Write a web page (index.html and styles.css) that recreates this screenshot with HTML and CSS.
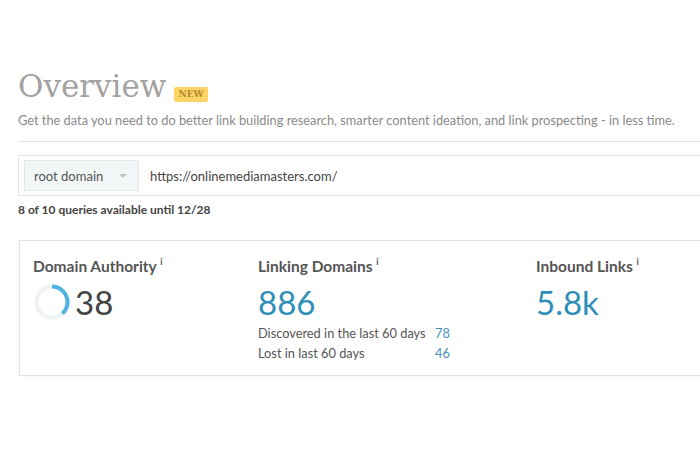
FILE: index.html
```html
<!DOCTYPE html>
<html lang="en">
<head>
<meta charset="utf-8">
<title>Overview</title>
<link rel="stylesheet" href="styles.css">
</head>
<body>
<main class="page">
  <header class="head">
    <h1 class="title">Overview <span class="badge">NEW</span></h1>
    <p class="lead">Get the data you need to do better link building research, smarter content ideation, and link prospecting - in less time.</p>
  </header>

  <div class="search">
    <div class="select">root domain <span class="caret"></span></div>
    <div class="url">https://onlinemediamasters.com/</div>
  </div>
  <p class="quota">8 of 10 queries available until 12/28</p>

  <section class="stats">
    <div class="stat">
      <h2 class="label">Domain Authority <sup>i</sup></h2>
      <div class="da">
        <svg class="donut" width="38" height="38" viewBox="0 0 38 38">
          <circle cx="19" cy="19" r="15.5" fill="none" stroke="#eef2f3" stroke-width="4"/>
          <circle cx="19" cy="19" r="15.5" fill="none" stroke="#4fb3e2" stroke-width="4" stroke-dasharray="37 100" transform="rotate(-90 19 19)"/>
        </svg>
        <span class="value dark">38</span>
      </div>
    </div>
    <div class="stat">
      <h2 class="label">Linking Domains <sup>i</sup></h2>
      <span class="value">886</span>
      <dl class="sub">
        <dt>Discovered in the last 60 days</dt><dd>78</dd>
        <dt>Lost in last 60 days</dt><dd>46</dd>
      </dl>
    </div>
    <div class="stat">
      <h2 class="label">Inbound Links <sup>i</sup></h2>
      <span class="value">5.8k</span>
    </div>
  </section>
</main>
</body>
</html>
```

FILE: styles.css
```css
* { box-sizing: border-box; }
html, body { margin: 0; padding: 0; background: #fff; overflow: hidden; }
body { font-family: Lato, "Open Sans", sans-serif; color: #555; width: 700px; height: 450px; }

.page { padding: 66px 0 0 18px; }

.head { border-bottom: 1px solid #e4e4e4; padding-bottom: 13px; width: 720px; }

.title {
  margin: 0;
  font-family: "DejaVu Serif", serif;
  font-weight: normal;
  font-size: 31px;
  line-height: 40px;
  color: #a2a2a2;
  display: flex;
  align-items: flex-end;
  gap: 8px;
}
.badge {
  font-family: "DejaVu Serif", serif;
  font-weight: bold;
  font-size: 9px;
  line-height: 15px;
  padding: 0 4px;
  background: #fdd465;
  color: #b18a2c;
  border-radius: 2px;
  margin-bottom: 4px;
}
.lead {
  margin: 6px 0 0;
  font-size: 12.8px;
  color: #8a8a8a;
  line-height: 16px;
}

.search {
  margin-top: 13px;
  height: 41px;
  width: 720px;
  border: 1px solid #e2e2e2;
  display: flex;
  align-items: center;
  padding-left: 5px;
  gap: 11px;
}
.select {
  width: 115px;
  height: 31px;
  background: #f2f6f6;
  border: 1px solid #e1e8e8;
  display: flex;
  align-items: center;
  padding-left: 9px;
  font-size: 13px;
  color: #555;
}
.caret {
  margin-left: 16px;
  width: 0; height: 0;
  border-left: 4px solid transparent;
  border-right: 4px solid transparent;
  border-top: 4px solid #bfc5c5;
}
.url { font-size: 13px; color: #444; }

.quota {
  margin: 6px 0 0;
  font-size: 12px;
  font-weight: bold;
  color: #444;
}

.stats {
  margin-top: 23px;
  margin-left: 1px;
  width: 720px;
  height: 136px;
  border: 1px solid #e3e3e3;
  box-shadow: 0 1px 2px rgba(0,0,0,0.04);
  display: grid;
  grid-template-columns: 225px 278px 1fr;
  padding: 11px 0 0 13px;
}
.label {
  margin: 0;
  font-size: 15.5px;
  font-weight: bold;
  color: #555;
  line-height: 20px;
}
.label sup { font-size: 9px; vertical-align: 7px; }
.value {
  display: block;
  font-size: 33px;
  line-height: 42px;
  color: #2f8fb8;
}
.stat > .value { margin-top: 5px; }
.da { display: flex; align-items: center; gap: 4px; margin-top: 5px; }
.value.dark { color: #444; }
.sub {
  margin: 2px 0 0;
  display: grid;
  grid-template-columns: 177px auto;
  row-gap: 3px;
  font-size: 12.8px;
  line-height: 17px;
}
.sub dt { color: #555; }
.sub dd { margin: 0; color: #4a8fbf; }
```
